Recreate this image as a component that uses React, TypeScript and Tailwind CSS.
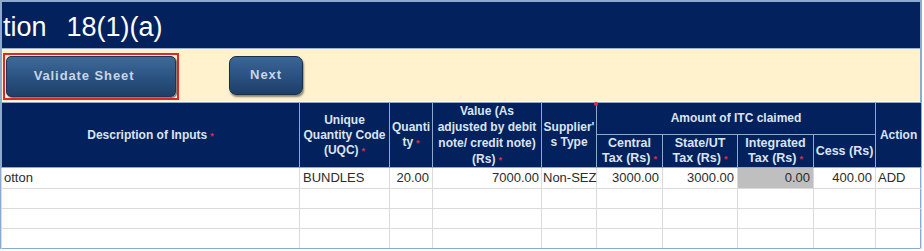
import React from "react";

const Star = () => <span className="text-[#e8264a] text-[9px] align-top ml-[3px] relative top-[1px]">*</span>;

const th = "border border-[#8ea9cf] text-center align-middle px-[1px] leading-[15px]";
const td = "border border-[#dadada] h-[20px] whitespace-nowrap";

export default function App() {
  const rows = [
    ["otton", "BUNDLES", "20.00", "7000.00", "Non-SEZ", "3000.00", "3000.00", "0.00", "400.00", "ADD"],
    ["", "", "", "", "", "", "", "", "", ""],
    ["", "", "", "", "", "", "", "", "", ""],
    ["", "", "", "", "", "", "", "", "", ""],
  ];
  const align = [
    "text-left pl-[2px] pr-[3px]",
    "text-left pl-[3px] pr-[3px]",
    "text-right pl-[2px] pr-[3px]",
    "text-right pl-[2px] pr-[2px]",
    "text-left pl-[1px] pr-0 overflow-visible",
    "text-right pl-[2px] pr-[3px]",
    "text-right pl-[2px] pr-[3px]",
    "text-right pl-[2px] pr-[3px]",
    "text-right pl-[2px] pr-[3px]",
    "text-left pl-[2px] pr-[2px]",
  ];
  return (
    <div className="w-[924px] h-[251px] bg-white overflow-hidden" style={{ fontFamily: '"Liberation Sans", Arial, sans-serif' }}>
      <div className="w-[922px] border-t-2 border-l-2 border-r-2 border-[#8ea9cf] bg-white">
        <div className="h-[46px] bg-[#03215d] flex items-center text-white text-[27px] leading-none pl-[1px] pt-[4px] whitespace-pre">
          tion<span className="ml-[20px]">18(1)(a)</span>
        </div>
        <div className="h-[1px] bg-[#9fb2cc]" />
        <div className="h-[53px] bg-[#fff2cc] flex items-center pl-[1px] border-b border-[#fffaf0]">
          <div className="w-[176px] h-[47px] border-2 border-[#e3262b] p-[1px] mt-[2px]">
            <div className="w-full h-full rounded-[5px] bg-gradient-to-b from-[#3f6a98] via-[#2b5483] to-[#1e4066] border border-[#1a3557] shadow-[1px_1px_1px_rgba(0,0,0,0.5)] flex items-center justify-center pr-[14px] text-[#c9d6e6] font-bold text-[13px] tracking-[0.9px]">
              Validate Sheet
            </div>
          </div>
          <div className="ml-[50px] w-[74px] h-[39px] rounded-[7px] bg-gradient-to-b from-[#3b6696] via-[#2a5282] to-[#1d3f66] border border-[#172d4b] shadow-[1px_2px_2px_rgba(0,0,0,0.45)] flex items-center justify-center text-[#c9d6e6] font-bold text-[13px] tracking-[0.9px]">
            Next
          </div>
        </div>
        <table className="table-fixed border-collapse w-[920px] -ml-[1px]">
          <colgroup>
            <col className="w-[298px]" />
            <col className="w-[90px]" />
            <col className="w-[43px]" />
            <col className="w-[109px]" />
            <col className="w-[55px]" />
            <col className="w-[66px]" />
            <col className="w-[75px]" />
            <col className="w-[76px]" />
            <col className="w-[62px]" />
            <col className="w-[46px]" />
          </colgroup>
          <thead className="bg-[#03215d] text-[#dbe4f0] font-bold text-[12px]">
            <tr className="h-[32px]">
              <th rowSpan={2} className={th}>Description of Inputs<Star /></th>
              <th rowSpan={2} className={th}>Unique<br />Quantity Code<br />(UQC)<Star /></th>
              <th rowSpan={2} className={th}>Quanti<br />ty<Star /></th>
              <th rowSpan={2} className={th + " leading-[16px]"}>Value (As<br />adjusted by debit<br />note/ credit note)<br />(Rs)<Star /></th>
              <th rowSpan={2} className={th + " relative"}>
                Supplier'<br />s Type
                <span className="absolute right-[-2px] top-[-1px] w-[4px] h-[4px] bg-[#e8264a] rounded-full" />
              </th>
              <th colSpan={4} className={th}>Amount of ITC claimed</th>
              <th rowSpan={2} className={th}>Action</th>
            </tr>
            <tr className="h-[33px]">
              <th className={th + " text-[12.5px]"}>Central<br />Tax (Rs)<Star /></th>
              <th className={th + " text-[12.5px]"}>State/UT<br />Tax (Rs)<Star /></th>
              <th className={th + " text-[12.5px]"}>Integrated<br />Tax (Rs)<Star /></th>
              <th className={th + " text-[12.5px]"}>Cess (Rs)</th>
            </tr>
          </thead>
          <tbody className="text-[13px] text-[#2b2b2b]">
            {rows.map((r, i) => (
              <tr key={i} className="h-[20px]">
                {r.map((c, j) => (
                  <td key={j} className={td + " " + align[j] + (i === 0 && j === 7 ? " bg-[#bfbfbf]" : "")}>
                    {c}
                  </td>
                ))}
              </tr>
            ))}
          </tbody>
        </table>
        <div className="h-[1px] bg-[#8ea9cf] -mt-[1px] relative" />
      </div>
    </div>
  );
}
